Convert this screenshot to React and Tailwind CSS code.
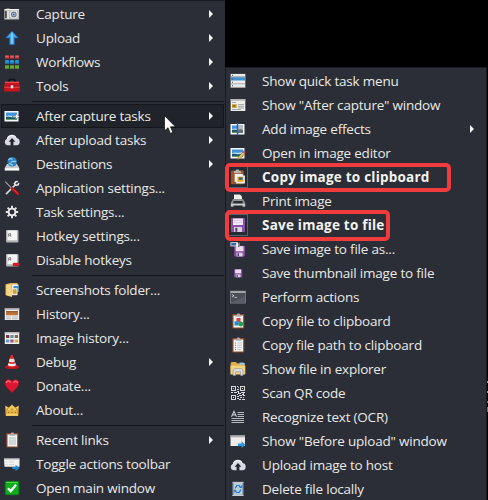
import React from "react";

const CloudUp = () => (
  <>
    <path d="M3.5 13.3A3.3 3.3 0 0 1 2.8 7 5.1 5.1 0 0 1 12.6 6a3.8 3.8 0 0 1 .6 7.3z" fill="#d9d9e6" />
    <path d="M3 7.5a5 5 0 0 1 9.5-1" stroke="#fff" fill="none" />
    <path d="M8 6l3.3 3.7H9.4v4H6.6v-4H4.7z" fill="#22252e" />
  </>
);

const Photo = () => (
  <>
    <rect x=".5" y="3" width="14" height="10.5" fill="#f4f8fa" />
    <rect x="2" y="4.5" width="11" height="7.5" fill="#4293dc" />
    <path d="M2 8.2c3-2 6 .8 11-1.2v2.6H2z" fill="#c3e4f8" />
    <path d="M2 9c3-.8 5 1 11 0v3H2z" fill="#205a66" />
    <path d="M2 11h11v1H2z" fill="#68a06b" />
  </>
);

const Board = () => (
  <>
    <rect x="2.3" y="1" width="12" height="14.5" rx=".8" fill="#8b4b2a" />
    <rect x="3.5" y="2.5" width="9.6" height="12" fill="#f2f5f4" />
    <path d="M5.5 3.8V2h1.2L7.4.5h2L10.1 2h1.2v1.8z" fill="#a9adb1" />
  </>
);

const Floppy = () => (
  <>
    <rect x="1" y="1" width="14" height="14" rx="1" fill="#8b50a8" />
    <rect x="3" y="1.5" width="10" height="6.5" fill="#f4e9f7" />
    <path d="M3 3.5h10M3 5.5h10" stroke="#d7c2df" strokeWidth=".7" />
    <rect x="4" y="10" width="8" height="5" fill="#d6d4dc" />
    <rect x="5.3" y="10.8" width="2" height="4" fill="#5c3470" />
  </>
);

const WindowArrow = () => (
  <>
    <rect x=".5" y="2.5" width="14.5" height="10.5" fill="#ececed" />
    <path d="M.5 2.5H15v1.8H.5z" fill="#a9a9ac" />
    <path d="M8 10.5h3.5V8.3l4 3.4-4 3.4v-2.2H8z" fill="#2f97df" />
  </>
);

const Key = () => (
  <>
    <rect x="2" y="2" width="12.5" height="12.5" rx="1" fill="#b4b4b6" />
    <rect x="3.4" y="2.5" width="9.6" height="9.8" rx=".8" fill="#f5f5f5" />
    <path d="M4.7 8.7V6l1-1 1 1v2.7M4.7 7.2h2" stroke="#666" fill="none" strokeWidth=".8" />
  </>
);

const icons = {
  camera: (
    <>
      <path d="M.3 3h2.2V2.4h3V3h9.6v10.5H.3z" fill="#bcbcb9" />
      <path d="M.8 3.6h14" stroke="#f4f4ef" strokeWidth="1.2" />
      <path d="M1 5h1.7v7H1z" fill="#4c4c4c" />
      <path d="M4 5v8" stroke="#eee" strokeWidth="1.4" />
      <circle cx="9.8" cy="8.5" r="4" fill="#ecedee" />
      <circle cx="9.8" cy="8.5" r="2.9" fill="#707985" />
      <circle cx="9.8" cy="8.5" r="1.7" fill="#aac2e3" />
      <circle cx="9.8" cy="8.5" r=".8" fill="#35445c" />
    </>
  ),
  up: (
    <>
      <path d="M8 1.3l6 6.5h-3.8v6.7H5.8V7.8H2z" fill="#4aabef" stroke="#1974c3" strokeWidth=".8" />
      <path d="M8 2.8v11" stroke="#8fd2fb" strokeWidth="1.5" />
    </>
  ),
  grid: (
    <>
      <path d="M1 1.5h4v3H1zm5 0h4v3H6zm5 0h4v3h-4z" fill="#d43b45" />
      <path d="M1 6.2h4v3.6H1zm5 0h4v3.6H6zm5 0h4v3.6h-4z" fill="#1687cf" />
      <path d="M1 11.2h4v3.5H1zm5 0h4v3.5H6zm5 0h4v3.5h-4z" fill="#64a92d" />
      <path d="M1.5 2.2h3m2 0h3m2 0h3" stroke="#f47d80" strokeWidth=".8" />
      <path d="M1.5 7h3m2 0h3m2 0h3" stroke="#59bded" strokeWidth=".8" />
    </>
  ),
  toolbox: (
    <>
      <path d="M5 4V2.6Q5 1.5 6.2 1.5h3.6Q11 1.5 11 2.6V4" fill="none" stroke="#111319" strokeWidth="1.7" />
      <path d="M1 4h14l.8 4.5v5H.2v-5z" fill="#c81420" />
      <path d="M1 4.2h14M.3 9h15.4" stroke="#f35b5d" />
      <path d="M.3 8h15.4" stroke="#8c101c" strokeWidth=".8" />
      <path d="M6.8 7.3h2.4v3H6.8z" fill="#eee" />
    </>
  ),
  photoArrow: (
    <>
      <Photo />
      <path d="M8.5 8h3V5.5l4 3-4 3V9.2h-3z" fill="#fff" stroke="#214c5c" strokeWidth=".5" />
    </>
  ),
  cloud: <CloudUp />,
  drive: (
    <>
      <path d="M3 8h10l2.3 4v2.7H.7V12z" fill="#c7c9cd" />
      <path d="M1 12.2h14V14H1z" fill="#fafafa" />
      <circle cx="8.2" cy="5.8" r="4.8" fill="#2b82bf" />
      <path d="M4.5 4c2-3 3 .5 4-1.5M7 6.5c1-2 3-.7 5-1M5 8c2-1 2 1 4 1" stroke="#8ccbf0" strokeWidth="1.4" fill="none" />
    </>
  ),
  tools: (
    <>
      <path d="M1.2 1.7l7 7" stroke="#a8a5a3" strokeWidth="1.1" />
      <path d="M2 14.2l9.2-9.3" stroke="#d5d5d5" strokeWidth="1.7" />
      <path d="M13.8 1.6l-2 .1-1.4 2 1.7 1.8 2.2-.8.4-1.8" stroke="#ededed" strokeWidth="1.5" fill="none" />
      <path d="M8.2 8.6l5.7 5.2" stroke="#bb1218" strokeWidth="2.8" strokeLinecap="round" />
      <path d="M9 9l5 4.6" stroke="#f04b50" strokeWidth=".7" />
    </>
  ),
  gear: (
    <>
      <path d="M8 1.8v12.4M1.8 8h12.4M3.6 3.6l8.8 8.8M3.6 12.4l8.8-8.8" stroke="#e3e3e3" strokeWidth="2" />
      <circle cx="8" cy="8" r="3.4" fill="#2a2d36" stroke="#e9e9e9" strokeWidth="1.9" />
    </>
  ),
  key: <Key />,
  keyOff: (
    <>
      <Key />
      <rect x="9" y="11" width="6.8" height="3" rx=".8" fill="#d61d2b" stroke="#941724" strokeWidth=".4" />
    </>
  ),
  folderPics: (
    <>
      <path d="M1.5 2.3L7 1l.8.8V15l-5.5-1.5-.8-.7z" fill="#e7ba5b" />
      <path d="M2.5 3L8 2v12.5l-5.5-1.6z" fill="#f7d783" />
      <path d="M7 1h6.5v9H7z" fill="#d7af4f" />
      <rect x="8" y="2.5" width="6.5" height="7" fill="#f6f9fa" />
      <rect x="9.4" y="4" width="5.5" height="6" fill="#448cc3" />
      <rect x="7.7" y="6.2" width="5.8" height="7" fill="#eee" />
      <rect x="8.8" y="7.3" width="3.8" height="4.6" fill="#d99f23" />
    </>
  ),
  history: (
    <>
      <rect x=".8" y="2" width="14.4" height="12" fill="#f0f0ed" />
      <path d="M.8 2h14.4v1.8H.8z" fill="#aaaaac" />
      <path d="M2 5.3h12v4H2z" fill="#b8753d" />
      <path d="M2 5.7h12" stroke="#834e2a" />
      <path d="M2 11h5m1 0h6M2 12.8h5m1 0h6" stroke="#a9aaad" strokeWidth=".8" />
    </>
  ),
  imageHistory: (
    <>
      <rect x=".8" y="2" width="14.4" height="12" fill="#f0f0ed" />
      <path d="M.8 2h14.4v1.6H.8z" fill="#bbbbbc" />
      <path d="M2 5h3.3v3H2z" fill="#7b3434" />
      <path d="M6.3 5h3.3v3H6.3z" fill="#638dac" />
      <path d="M10.7 5H14v3h-3.3z" fill="#7c6855" />
      <path d="M2 9.5h3.3v3H2z" fill="#639fc4" />
      <path d="M6.3 9.5h3.3v3H6.3z" fill="#9e5391" />
      <path d="M10.7 9.5H14v3h-3.3z" fill="#d6ad3f" />
    </>
  ),
  cone: (
    <>
      <path d="M1 12.2l3-1.2h8l3 1.2v1.5L12 15H4l-3-1.3z" fill="#b91620" />
      <path d="M6.8 1h2l3.8 11.2Q8 14.8 3.5 12.2z" fill="#de2b32" />
      <path d="M5.8 4.6q2 .8 4.1 0l1.1 3q-3 1.3-6.2 0z" fill="#e8e4e4" />
      <path d="M4.4 9.3q3.5 1.3 7.1 0l.7 2q-4 1.8-8.4 0z" fill="#eee" />
      <path d="M9.5 4l2.3 8" stroke="#8e7c85" strokeWidth=".8" opacity=".5" />
    </>
  ),
  heart: (
    <>
      <path d="M8 14.8C5.5 11.5 1 8.8 1 5.2c0-4.2 5.2-4.8 7-1.6 1.8-3.2 7-2.6 7 1.6 0 3.6-4.5 6.3-7 9.6z" fill="#dd1730" stroke="#951125" strokeWidth=".5" />
      <path d="M2.3 5c.3-2.5 3.5-2.5 4.5-.5M9.5 4.6c1.3-2 4-1.6 4.1.5" stroke="#fb6674" strokeWidth="1.4" fill="none" />
    </>
  ),
  crown: (
    <>
      <path d="M1.2 3.5L4.7 5.5 8 2.5l3.3 3 3.5-2-.6 10.5H1.8z" fill="#e5b543" />
      <path d="M2 5l2.8 3L8 4.2 11.2 8 14 5M2.3 12.8h11.4" stroke="#ffdf83" fill="none" />
      <path d="M4 10.4h1m2.5 0h1m2.4 0h1M3 7h.8M7.6 7h.8M12.2 7h.8" stroke="#a6432b" />
      <path d="M1.8 7v6m12.4-6v6" stroke="#b27c22" strokeWidth=".7" />
    </>
  ),
  notes: (
    <>
      <Board />
      <path d="M5 6h7M5 8h7M5 10h7M5 12h7" stroke="#9cadad" strokeWidth=".8" />
    </>
  ),
  windowArrow: <WindowArrow />,
  toolbar: (
    <>
      <path d="M0 2.5h15.5v8.2H.5z" fill="#f2f2f2" />
      <path d="M0 2.5h15.5v1H0z" fill="#aaa" />
      <path d="M1.5 6h2M5 6h5M1.5 8.5h2M5 8.5h5" stroke="#c7c7c8" strokeWidth=".7" />
      <path d="M8.2 11h3.3V8.8l4 3.1-4 3.2V13H8.2z" fill="#2588d3" />
    </>
  ),
  check: (
    <>
      <rect x="1.3" y="1.3" width="13.5" height="13.5" rx="1.3" fill="#0cae1e" stroke="#078313" strokeWidth=".7" />
      <path d="M2.2 2.5h11.6" stroke="#53d455" />
      <path d="M4 8.2l2.7 3L12 4.8" stroke="#fff" strokeWidth="2.2" fill="none" />
    </>
  ),
  list: (
    <>
      <rect x=".7" y=".9" width="14.6" height="13.8" fill="#eceded" />
      <path d="M.7 4.2h14.6v3.3H.7z" fill="#428fcd" />
      <path d="M.7 3.6h14.6M.7 10.8h14.6M.7 14.3h14.6" stroke="#96989b" strokeWidth=".8" />
      <path d="M2 2.3h1M2 5.9h1M2 9.2h1M2 12.7h1" stroke="#4d5058" />
    </>
  ),
  article: (
    <>
      <rect x=".7" y="2" width="14.6" height="12" fill="#eeeeeb" />
      <path d="M.7 2h14.6v1.8H.7z" fill="#b5b5b6" />
      <path d="M2 7.3h4.7v3.5H2z" fill="#c59423" />
      <path d="M3 9h2" stroke="#66501a" />
      <path d="M2 5.5h4m2 2.1h6M8 9.4h6M8 11h6M2 12.5h9" stroke="#9b9ca0" strokeWidth=".9" />
    </>
  ),
  effects: (
    <>
      <Photo />
      <path d="M8 4.5h5v7.5H8z" fill="#b5b9bc" />
      <path d="M8 9q2-1.5 5 0v3H8z" fill="#66706e" />
      <path d="M7.5 1.8v12.5" stroke="#2459d0" strokeWidth="1.4" />
    </>
  ),
  editor: (
    <>
      <Photo />
      <path d="M7.5 14.5l1-2.6 4.5-5 1.9 1.6-4.7 5z" fill="#f2ca62" stroke="#7f5519" strokeWidth=".6" />
      <path d="M12.7 7.1l1.2-1.5 1.9 1.6-1.3 1.5z" fill="#cf4459" />
    </>
  ),
  clipImage: (
    <>
      <rect x="1" y="1.5" width="12.7" height="13.8" rx="1" fill="#a35427" />
      <path d="M4 4.2V2h1.4L6.3.4h2.3L9.5 2h1.6v2.2z" fill="#b7b3b0" />
      <rect x="4.7" y="5" width="8.2" height="7.8" fill="#f7f7f1" />
      <rect x="6.1" y="6.5" width="8.8" height="8" fill="#eee" />
      <rect x="7.4" y="7.8" width="6" height="5" fill="#e6ae23" />
      <rect x="8.7" y="8.3" width="3.8" height="2.5" fill="#2f629f" />
    </>
  ),
  printer: (
    <>
      <path d="M4 8V1.4h6l2 2V8z" fill="#eee" />
      <path d="M3 6h10l2.3 4v4H.8v-4z" fill="#8f9395" />
      <path d="M3.3 8h9.4v2.3H3.3z" fill="#2d3032" />
      <path d="M1 11h14v1.7H1z" fill="#d2d4d5" />
      <path d="M3.5 12.5h9v2.2h-9z" fill="#292b2d" />
    </>
  ),
  floppy: <Floppy />,
  saveAs: (
    <>
      <g transform="translate(3.5 4.1) scale(.76)"><Floppy /></g>
      <rect x=".5" y="1.3" width="9" height="4" fill="#fff" />
      <rect x="1.2" y="2" width="5" height="2.6" fill="#2d66be" />
      <path d="M8.8 1v5M7.8 1h2" stroke="#15171e" strokeWidth=".8" />
    </>
  ),
  floppySmall: <g transform="translate(3.5 3.6) scale(.58)"><Floppy /></g>,
  terminal: (
    <>
      <rect x=".6" y="2.1" width="14.8" height="12" fill="#4b4e57" stroke="#858b93" strokeWidth=".7" />
      <path d="M.6 2.2h14.8v1.7H.6z" fill="#aeb1b4" />
      <path d="M2 5.5l2 1.2-2 1.2M4.5 8.4h2.6" stroke="#ddd" fill="none" strokeWidth=".8" />
      <path d="M2 13.5L14.8 7v6.5z" fill="#6a6875" opacity=".5" />
    </>
  ),
  clipFile: (
    <>
      <Board />
      <path d="M6.5 5h4v4h-4z" fill="#e23943" />
      <path d="M4.5 8.3h4.2v4.2H4.5z" fill="#248ad4" />
      <circle cx="10.8" cy="11" r="2.4" fill="#259e4d" />
    </>
  ),
  clipPath: (
    <>
      <Board />
      <path d="M5 6h1m-1 2.2h1m-1 2.2h1m-1 2.2h1" stroke="#328caf" />
      <path d="M7.3 6H12m-4.7 2.2H12m-4.7 2.2H12m-4.7 2.2H11" stroke="#a9aaac" strokeWidth=".7" />
    </>
  ),
  explorer: (
    <>
      <path d="M.7 2l1-.9H6l1 1.2h7.8v11.2H.7z" fill="#deaf4c" />
      <path d="M9.5 1.5h4l1 1v1.2h-5z" fill="#8ac5ea" />
      <path d="M.5 4.5h14.8v8.7H.5z" fill="#f3d27b" />
      <path d="M3.2 14.5V9l1.3-1.4h7L13 9v5.5h-2.5v-3.7h-5v3.7z" fill="#d9dde3" stroke="#8d8e91" strokeWidth=".6" />
    </>
  ),
  qr: (
    <g stroke="#d8d8d8" fill="none" strokeWidth="1" shapeRendering="crispEdges">
      <path d="M1.5 1.5h4v4h-4zM10.5 1.5h4v4h-4zM1.5 10.5h4v4h-4z" />
      <path d="M3 3.5h1M12 3.5h1M3 12.5h1M7 1.5h1M8 2.5h1M7 4.5h2M7 6.5h2M1 7.5h2M4 7.5h3M8 8.5h3M11 7.5h4M13 8.5h1M7 9.5h1M9 10.5h3M13 10.5h2M7 11.5h2M10 12.5h2M13 12.5h1M7 13.5h2M9 14.5h2M12 14.5h3M8 7.5h1M12 9.5h2" />
    </g>
  ),
  ocr: (
    <g stroke="#c9cbd0" fill="none">
      <path d="M1.5 7.8L4 2.3l2.5 5.5M2.6 6h2.8" strokeWidth="1.1" />
      <path d="M7.5 3.5H14M7.5 5.5H14M7.5 7.5H14M1.5 9.5H14M1.5 11.5H14M1.5 13.5H14" strokeWidth=".9" />
    </g>
  ),
  recycle: (
    <>
      <path d="M2.5 1h11v14h-11z" fill="#829eae" />
      <path d="M3.8 1.8h8.4v12H3.8z" fill="#b9cfda" />
      <path d="M2.5 1.3h11M2.5 14.5h11" stroke="#d6dde0" strokeWidth=".8" />
      <path d="M5.3 7.3l1.5-2.8h2.4l1.5 2M10.8 8.5l-1.5 3H6.5L5 9.4" stroke="#2372ce" strokeWidth="1.2" fill="none" />
      <path d="M9.5 6.5h2.3V4.2M6.3 9.3H4.2v2.2" stroke="#2372ce" fill="none" />
    </>
  ),
};

const mainMenu = [
  { icon: "camera", label: "Capture", sub: true },
  { icon: "up", label: "Upload", sub: true },
  { icon: "grid", label: "Workflows", sub: true },
  { icon: "toolbox", label: "Tools", sub: true },
  null,
  { icon: "photoArrow", label: "After capture tasks", sub: true, active: true },
  { icon: "cloud", label: "After upload tasks", sub: true },
  { icon: "drive", label: "Destinations", sub: true },
  { icon: "tools", label: "Application settings..." },
  { icon: "gear", label: "Task settings..." },
  { icon: "key", label: "Hotkey settings..." },
  { icon: "keyOff", label: "Disable hotkeys" },
  null,
  { icon: "folderPics", label: "Screenshots folder..." },
  { icon: "history", label: "History..." },
  { icon: "imageHistory", label: "Image history..." },
  { icon: "cone", label: "Debug", sub: true },
  { icon: "heart", label: "Donate..." },
  { icon: "crown", label: "About..." },
  null,
  { icon: "notes", label: "Recent links", sub: true },
  { icon: "toolbar", label: "Toggle actions toolbar" },
  { icon: "check", label: "Open main window" },
];

const taskMenu = [
  { icon: "list", label: "Show quick task menu" },
  { icon: "article", label: 'Show "After capture" window' },
  { icon: "effects", label: "Add image effects", sub: true },
  { icon: "editor", label: "Open in image editor" },
  { icon: "clipImage", label: "Copy image to clipboard", checked: true, mark: "w-[226px] h-[29px] top-[-3px]" },
  { icon: "printer", label: "Print image" },
  { icon: "floppy", label: "Save image to file", checked: true, mark: "w-[165px] h-[31px] top-[-4px]" },
  { icon: "saveAs", label: "Save image to file as..." },
  { icon: "floppySmall", label: "Save thumbnail image to file" },
  { icon: "terminal", label: "Perform actions" },
  { icon: "clipFile", label: "Copy file to clipboard" },
  { icon: "clipPath", label: "Copy file path to clipboard" },
  { icon: "explorer", label: "Show file in explorer" },
  { icon: "qr", label: "Scan QR code" },
  { icon: "ocr", label: "Recognize text (OCR)" },
  { icon: "windowArrow", label: 'Show "Before upload" window' },
  { icon: "cloud", label: "Upload image to host" },
  { icon: "recycle", label: "Delete file locally" },
];

function Item({ icon, label, sub, active, checked, mark }) {
  return (
    <li
      className={`relative flex h-6 shrink-0 items-center border pr-[10px] ${
        active ? "border-[#15171c] bg-[#202329]" : "border-transparent"
      }`}
    >
      <span className={`flex h-[22px] w-5 shrink-0 items-center justify-center border ${checked ? "border-[#566270] bg-[#252a33]" : "border-transparent"}`}>
        <svg viewBox="0 0 16 16" className="size-4 shrink-0">{icons[icon]}</svg>
      </span>
      <span className={`ml-3.5 whitespace-nowrap text-[13.5px] leading-6 ${checked ? "font-bold tracking-[0.22px] text-[#f2f2ee]" : "tracking-[-0.21px]"}`}>
        {label}
      </span>
      {sub && (
        <svg viewBox="0 0 4 8" className="mb-px ml-auto h-2 w-1 shrink-0">
          <path d="M0 0l4 4-4 4z" fill="#f4f4f4" />
        </svg>
      )}
      {mark && <span className={`absolute left-[-3px] z-10 rounded-[5px] border-4 border-[#f03c3c] ${mark}`} />}
    </li>
  );
}

export default function App() {
  return (
    <main className="relative flex h-[500px] w-[488px] overflow-hidden bg-black font-['Open_Sans','Noto_Sans',sans-serif] text-[#e9e9e5]">
      <ul className="flex w-[225px] shrink-0 flex-col border-t border-[#15181e] bg-[#2b2e37] px-px pt-px">
        {mainMenu.map((item, i) =>
          item ? (
            <Item key={i} {...item} />
          ) : (
            <li key={i} className="flex h-1.5 shrink-0 items-center pl-[31px]">
              <span className="h-px w-full bg-[#15171d]" />
            </li>
          )
        )}
      </ul>
      <ul className="mt-[67px] flex w-[262px] shrink-0 flex-col border-x border-t border-[#171a20] bg-[#2b2e37] px-px pt-px">
        {taskMenu.map((item, i) => (
          <Item key={i} {...item} />
        ))}
      </ul>
      <div className="flex w-px flex-col gap-[8px] pt-[381px]">
        <span className="h-0.5 bg-[#999]" />
        <span className="h-0.5 bg-[#999]" />
        <span className="h-0.5 bg-[#777]" />
        <span className="-mt-1 h-[5px] bg-[#777]" />
      </div>
      <svg viewBox="0 0 12 20" className="absolute left-[164px] top-[115px] h-5 w-3">
        <path d="M.5.7v15.2l3.5-3.2 2.4 5.7 2.5-1.1-2.4-5.5h5z" fill="#fff" stroke="#080808" strokeWidth=".7" />
      </svg>
    </main>
  );
}
